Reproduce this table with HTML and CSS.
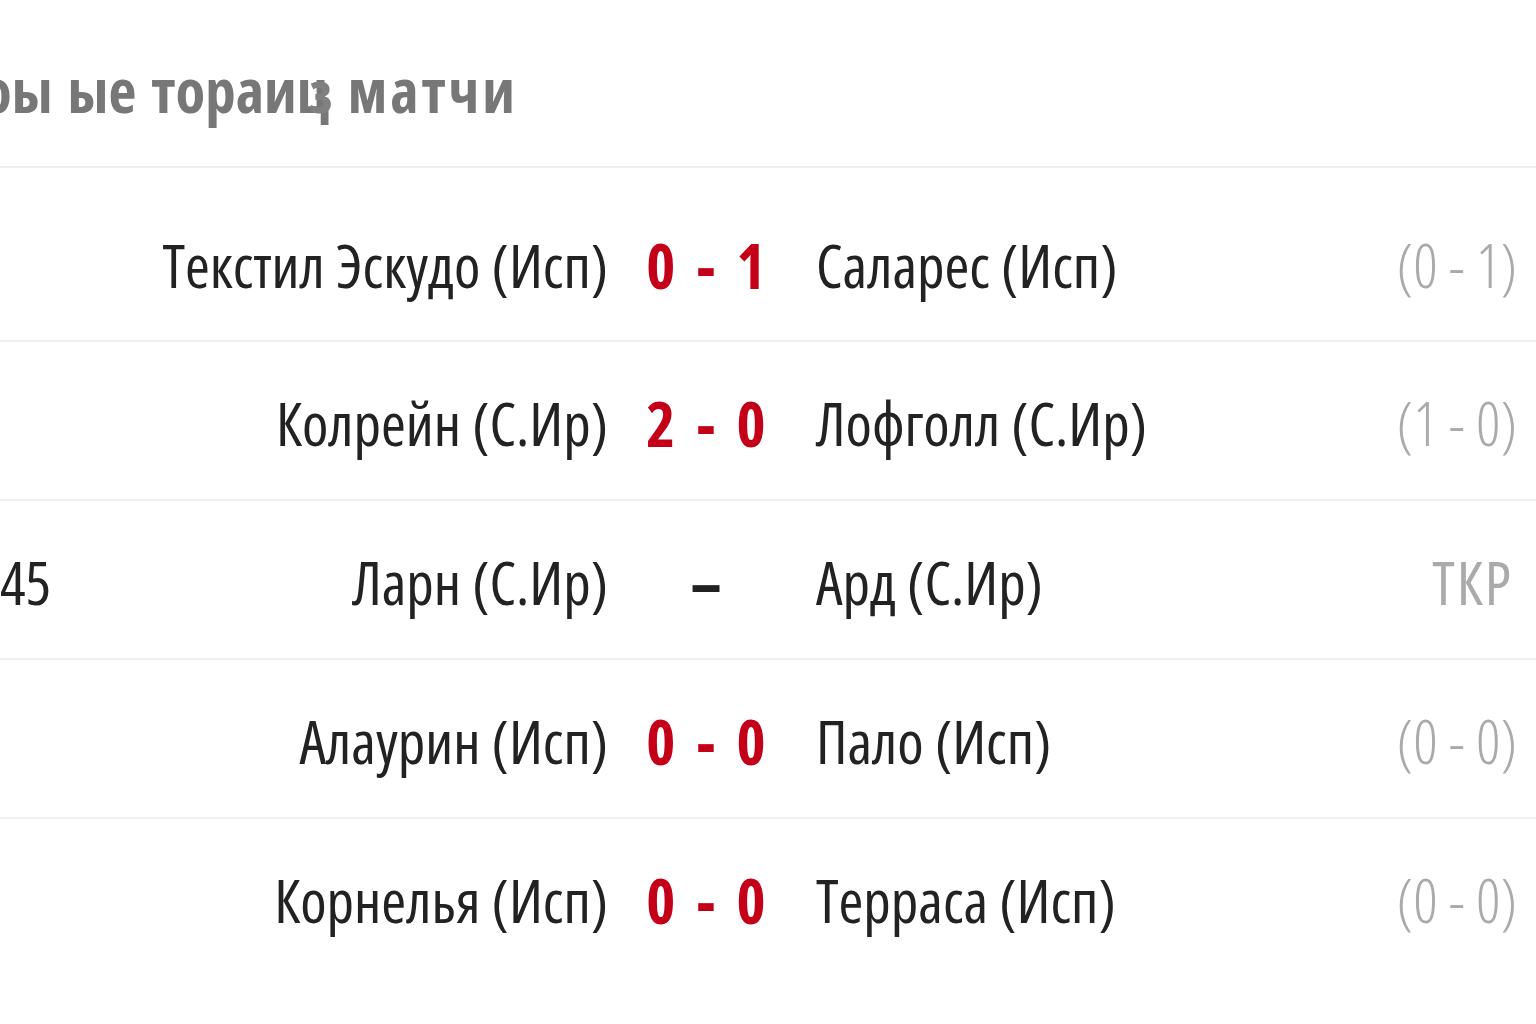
FILE: index.html
```html
<!DOCTYPE html>
<html lang="ru">
<head>
<meta charset="utf-8">
<link rel="stylesheet" href="styles.css">
</head>
<body>
<div class="page">
  <header class="head">
    <h1 class="title"><span class="cut">о</span>ы ые тораиц<span class="over">з</span> <span class="wide">матчи</span></h1>
  </header>
  <div class="row first">
    <div class="time"></div>
    <div class="home">Текстил Эскудо (Исп)</div>
    <div class="score">0 - 1</div>
    <div class="away">Саларес (Исп)</div>
    <div class="ht">(0 - 1)</div>
  </div>
  <div class="row">
    <div class="time"></div>
    <div class="home">Колрейн (С.Ир)</div>
    <div class="score">2 - 0</div>
    <div class="away">Лофголл (С.Ир)</div>
    <div class="ht">(1 - 0)</div>
  </div>
  <div class="row">
    <div class="time">45</div>
    <div class="home">Ларн (С.Ир)</div>
    <div class="score dash">–</div>
    <div class="away">Ард (С.Ир)</div>
    <div class="ht tkr">ТКР</div>
  </div>
  <div class="row">
    <div class="time"></div>
    <div class="home">Алаурин (Исп)</div>
    <div class="score">0 - 0</div>
    <div class="away">Пало (Исп)</div>
    <div class="ht">(0 - 0)</div>
  </div>
  <div class="row last">
    <div class="time"></div>
    <div class="home">Корнелья (Исп)</div>
    <div class="score">0 - 0</div>
    <div class="away">Терраса (Исп)</div>
    <div class="ht">(0 - 0)</div>
  </div>
</div>
</body>
</html>
```
FILE: styles.css
```css
html, body {
  margin: 0;
  padding: 0;
  background: #ffffff;
  overflow: hidden;
}
.page {
  width: 1536px;
  height: 1024px;
  overflow: hidden;
  font-family: "Open Sans", "Noto Sans", sans-serif;
  font-stretch: 75%;
}
.head {
  height: 166px;
  border-bottom: 2px solid #efefef;
  display: flex;
  align-items: center;
}
.title {
  margin: 0 0 0 -18px;
  font-size: 61px;
  font-weight: 700;
  color: #777777;
  white-space: nowrap;
  line-height: 1;
  padding-top: 12px;
  word-spacing: 4px;
}
.over {
  margin-left: -20px;
  font-size: 58px;
  color: #808080;
}
.wide {
  letter-spacing: 3px;
}
.row {
  display: grid;
  grid-template-columns: 120px 488px 196px 1fr 160px;
  align-items: center;
  height: 157px;
  border-bottom: 2px solid #f0f0f0;
  font-size: 60px;
  line-height: 1;
  color: #222222;
}
.row.first {
  height: 172px;
}
.row.first > div { padding-top: 22px; }
.row > div { padding-top: 4px; }
.row.last { border-bottom: none; }
.time {
  text-align: left;
}
.home {
  text-align: right;
  white-space: nowrap;
}
.score {
  text-align: center;
  font-weight: 700;
  color: #c40018;
  font-size: 62px;
  word-spacing: 10px;
  white-space: nowrap;
}
.score.dash { color: #222222; }
.away {
  padding-left: 12px;
  white-space: nowrap;
}
.ht {
  text-align: right;
  color: #aaaaaa;
  font-weight: 300;
  padding-right: 19px;
  white-space: nowrap;
}
.ht.tkr {
  padding-right: 23px;
  letter-spacing: 2px;
  font-weight: 400;
}
```
